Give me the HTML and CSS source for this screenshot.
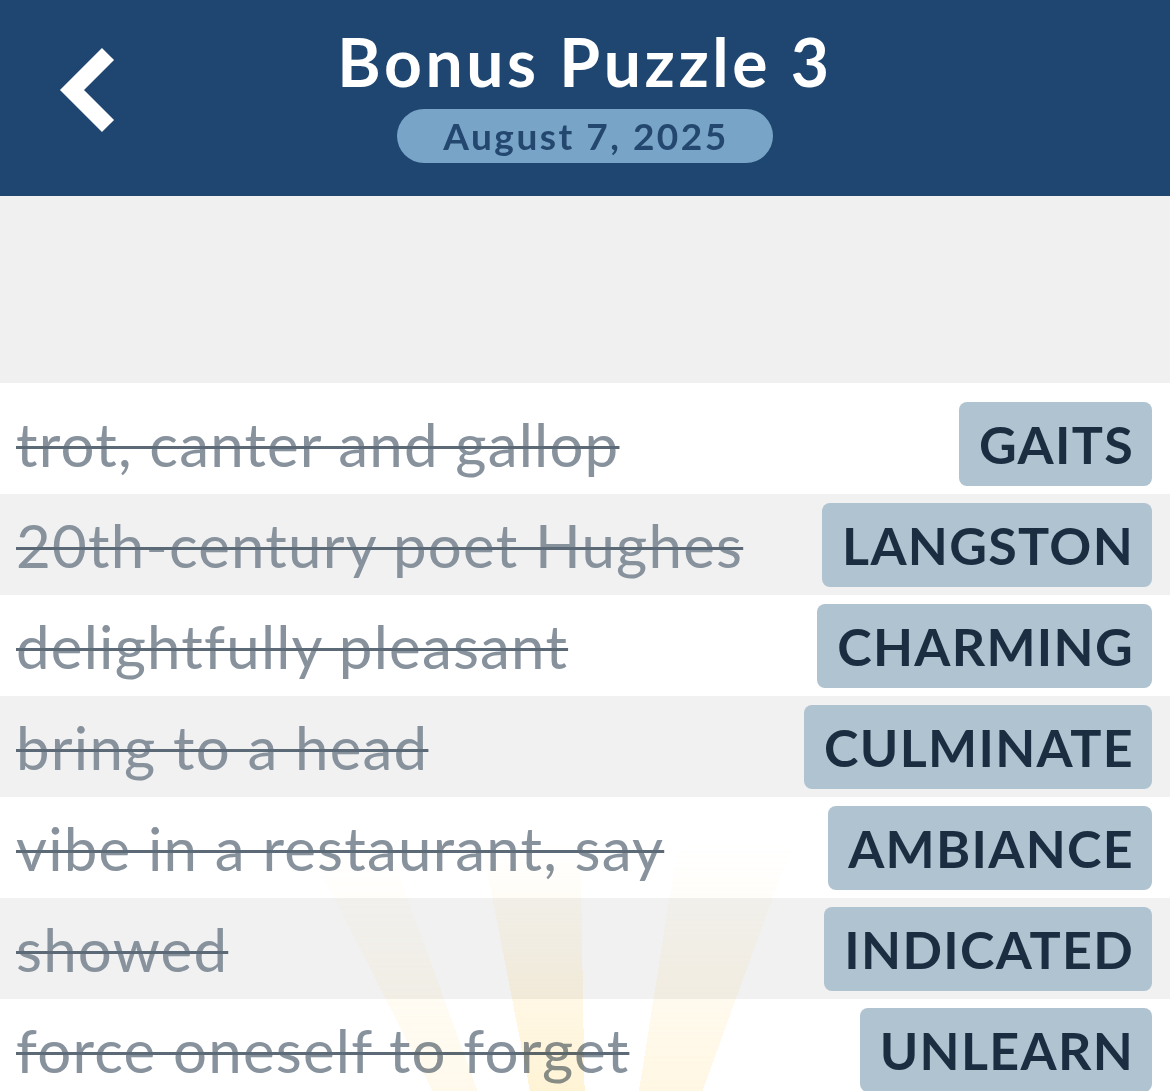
FILE: index.html
```html
<!DOCTYPE html>
<html>
<head>
<meta charset="utf-8">
<link rel="stylesheet" href="styles.css">
</head>
<body>
<div class="app">
  <header class="header">
    <button class="back" aria-label="Back">
      <svg width="60" height="88" viewBox="0 0 60 88"><path d="M52 8 L16 44 L52 80" fill="none" stroke="#fff" stroke-width="17" stroke-linejoin="miter"/></svg>
    </button>
    <h1 class="title">Bonus Puzzle 3</h1>
    <div class="date">August 7, 2025</div>
  </header>
  <div class="spacer"></div>
  <main class="list">
    <div class="row"><span class="clue">trot, canter and gallop</span><span class="tag">GAITS</span></div>
    <div class="row alt"><span class="clue">20th-century poet Hughes</span><span class="tag">LANGSTON</span></div>
    <div class="row"><span class="clue">delightfully pleasant</span><span class="tag">CHARMING</span></div>
    <div class="row alt"><span class="clue">bring to a head</span><span class="tag">CULMINATE</span></div>
    <div class="row"><span class="clue">vibe in a restaurant, say</span><span class="tag">AMBIANCE</span></div>
    <div class="row alt"><span class="clue">showed</span><span class="tag">INDICATED</span></div>
    <div class="row"><span class="clue">force oneself to forget</span><span class="tag">UNLEARN</span></div>
    <div class="rays"></div>
  </main>
</div>
</body>
</html>
```
FILE: styles.css
```css
* { box-sizing: border-box; }
html, body { margin: 0; padding: 0; }
body {
  width: 1170px;
  height: 1091px;
  overflow: hidden;
  background: #ffffff;
  font-family: "Lato", "Noto Sans", sans-serif;
}
.app { display: flex; flex-direction: column; }
.header {
  position: relative;
  height: 196px;
  background: #1f4670;
  display: flex;
  flex-direction: column;
  align-items: center;
  padding-top: 22px;
}
.back {
  position: absolute;
  left: 56px;
  top: 46px;
  background: none;
  border: 0;
  padding: 0;
  width: 60px;
  height: 88px;
}
.back svg { display: block; }
.title {
  margin: 0;
  color: #ffffff;
  font-weight: 700;
  font-size: 66px;
  line-height: 80px;
  letter-spacing: 3.6px;
}
.date {
  margin-top: 7px;
  background: #78a4c7;
  color: #23476e;
  font-weight: 700;
  font-size: 37px;
  line-height: 54px;
  height: 54px;
  padding: 0 44px 0 46px;
  border-radius: 27px;
  letter-spacing: 2.5px;
}
.spacer { height: 187px; background: #f0f0f0; }
.list {
  position: relative;
  background: #ffffff;
  padding-top: 10px;
}
.row {
  position: relative;
  z-index: 1;
  height: 101px;
  display: flex;
  align-items: center;
  justify-content: space-between;
  padding: 0 18px 0 16px;
}
.row.alt { background: rgba(240, 240, 240, 0.9); }
.clue {
  color: #87929d;
  font-size: 60px;
  line-height: 70px;
  letter-spacing: 1.2px;
  text-decoration: line-through;
  text-decoration-color: #5c6a78;
  text-decoration-thickness: 3px;
  white-space: nowrap;
  margin-top: 0;
}
.tag {
  background: #b0c3d1;
  color: #1b2d40;
  font-weight: 700;
  font-size: 52px;
  height: 84px;
  line-height: 84px;
  padding: 0 18px 0 20px;
  border-radius: 8px;
  letter-spacing: 1.3px;
}
.rays {
  position: absolute;
  left: 0;
  right: 0;
  top: 0;
  bottom: -20px;
  z-index: 2;
  pointer-events: none;
  background: conic-gradient(from 0deg at 590px 1017px,
    transparent 0deg,
    transparent 9deg,
    rgba(255, 214, 110, 0.2) 9deg,
    rgba(255, 214, 110, 0.2) 20deg,
    transparent 20deg,
    transparent 333deg,
    rgba(255, 214, 110, 0.14) 333deg,
    rgba(255, 214, 110, 0.14) 340deg,
    transparent 340deg,
    transparent 349deg,
    rgba(255, 214, 110, 0.3) 349deg,
    rgba(255, 214, 110, 0.3) 359deg,
    transparent 359deg);
  -webkit-mask-image: linear-gradient(to bottom, transparent 460px, rgba(0,0,0,0.6) 620px, #000 720px);
  mask-image: linear-gradient(to bottom, transparent 460px, rgba(0,0,0,0.6) 620px, #000 720px);
  mix-blend-mode: multiply;
}
```
